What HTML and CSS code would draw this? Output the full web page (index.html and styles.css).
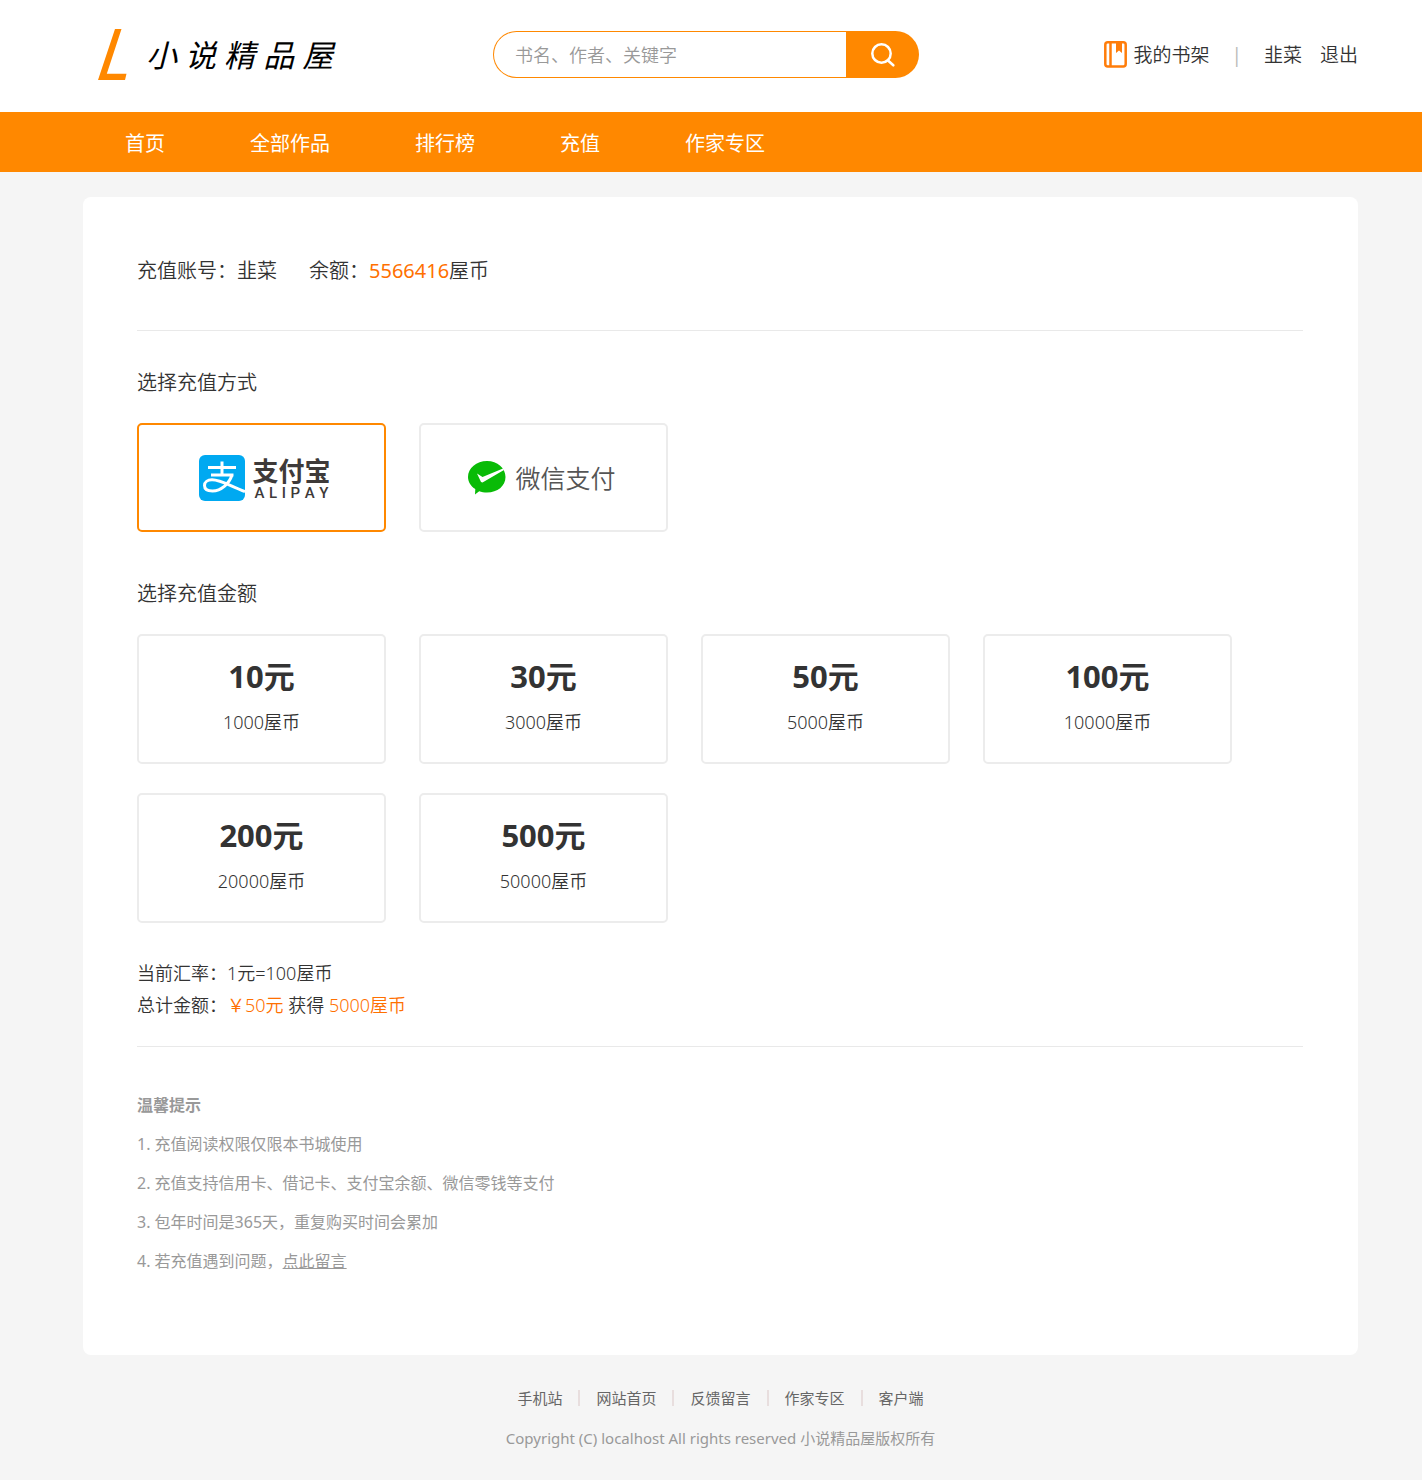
FILE: index.html
```html
<!DOCTYPE html>
<html lang="zh-CN">
<head>
<meta charset="utf-8">
<title>充值 - 小说精品屋</title>
<meta name="viewport" content="width=device-width, initial-scale=1">
<link rel="stylesheet" href="styles.css">
</head>
<body>
<header class="header">
  <div class="wrap header-row">
    <a class="logo" href="#">
      <svg class="logo-mark" viewBox="0 0 30 52" aria-hidden="true"><path d="M17 0H23.500L8.800 44.800H28.500L27 51H0Z"/></svg>
      <span class="logo-text">小 说 精 品 屋</span>
    </a>
    <form class="search">
      <input class="search-input" type="text" placeholder="书名、作者、关键字" aria-label="搜索">
      <button class="search-btn" type="button" aria-label="搜索">
        <svg class="search-icon" viewBox="0 0 24 24" aria-hidden="true"><circle cx="10.500" cy="10.500" r="9.200"/><path d="M17 17.500L22.300 22.300"/></svg>
      </button>
    </form>
    <div class="user">
      <a class="shelf" href="#">
        <svg class="shelf-icon" viewBox="0 0 23 27" aria-hidden="true"><rect class="shelf-line" x="1.300" y="1.300" width="20.400" height="24.200" rx="2.500"/><path class="shelf-line" d="M6.500 1.500V25.500"/><path class="shelf-fill" d="M12 1H18V12L15 9.500L12 12Z"/></svg>
        <span>我的书架</span>
      </a>
      <span class="user-sep">|</span>
      <a class="user-name" href="#">韭菜</a>
      <a href="#">退出</a>
    </div>
  </div>
</header>
<nav class="nav">
  <div class="wrap nav-row">
    <a href="#">首页</a>
    <a href="#">全部作品</a>
    <a href="#">排行榜</a>
    <a href="#">充值</a>
    <a href="#">作家专区</a>
  </div>
</nav>
<main class="wrap panel">
  <section class="account">
    <span>充值账号：韭菜</span>
    <span>余额：<em class="balance">5566416</em>屋币</span>
  </section>
  <form class="recharge">
    <h2 class="title">选择充值方式</h2>
    <div class="options">
      <label class="option pay pay-alipay">
        <input class="option-radio" type="radio" name="pay" value="alipay" checked>
        <svg class="alipay-icon" viewBox="0 0 46 46" aria-hidden="true"><rect class="alipay-bg" width="46" height="46" rx="6"/><path class="alipay-line" d="M9 12.500H37M12 20H34.500M23 6.500V20M33 20C30 29 22 36 13.500 36C8 36 5.500 33.500 5.500 30.500C5.500 27 8.500 24.800 13 24.800C22 24.800 32 31.500 46 36.500"/></svg>
        <span class="alipay-words">
          <span class="alipay-cn">支付宝</span>
          <span class="alipay-en"><span>A</span><span>L</span><span>I</span><span>P</span><span>A</span><span>Y</span></span>
        </span>
      </label>
      <label class="option pay pay-wechat">
        <input class="option-radio" type="radio" name="pay" value="wechat">
        <svg class="wechat-icon" viewBox="0 0 38 34" aria-hidden="true"><path class="wechat-bg" d="M19 0C29.500 0 37.500 7 37.500 16C37.500 25 29.500 31.500 19 31.500C16.200 31.500 13.500 31.100 11.200 30.200L7 33.500L7.300 28C2.800 25.200 0 21 0 16C0 7 8.500 0 19 0Z"/><path class="wechat-check" d="M9 12.500L14.500 16L35 7.500L36 9L14.500 21.500L13 21Z"/></svg>
        <span class="wechat-text">微信支付</span>
      </label>
    </div>
    <h2 class="title">选择充值金额</h2>
    <div class="options">
      <label class="option amount"><input class="option-radio" type="radio" name="amount" value="10"><strong>10元</strong><span>1000屋币</span></label>
      <label class="option amount"><input class="option-radio" type="radio" name="amount" value="30"><strong>30元</strong><span>3000屋币</span></label>
      <label class="option amount"><input class="option-radio" type="radio" name="amount" value="50"><strong>50元</strong><span>5000屋币</span></label>
      <label class="option amount"><input class="option-radio" type="radio" name="amount" value="100"><strong>100元</strong><span>10000屋币</span></label>
      <label class="option amount"><input class="option-radio" type="radio" name="amount" value="200"><strong>200元</strong><span>20000屋币</span></label>
      <label class="option amount"><input class="option-radio" type="radio" name="amount" value="500"><strong>500元</strong><span>50000屋币</span></label>
    </div>
    <div class="summary">
      <p>当前汇率：1元=100屋币</p>
      <p>总计金额：<span class="price">￥50元</span> 获得 <span class="price">5000屋币</span></p>
    </div>
  </form>
  <section class="tips">
    <h3>温馨提示</h3>
    <p>1. 充值阅读权限仅限本书城使用</p>
    <p>2. 充值支持信用卡、借记卡、支付宝余额、微信零钱等支付</p>
    <p>3. 包年时间是365天，重复购买时间会累加</p>
    <p>4. 若充值遇到问题，<a href="#">点此留言</a></p>
  </section>
</main>
<footer class="footer wrap">
  <div class="footer-links">
    <a href="#">手机站</a><i></i><a href="#">网站首页</a><i></i><a href="#">反馈留言</a><i></i><a href="#">作家专区</a><i></i><a href="#">客户端</a>
  </div>
  <p class="copyright">Copyright (C) localhost All rights reserved 小说精品屋版权所有</p>
</footer>
</body>
</html>
```
FILE: styles.css
```css
* { box-sizing: border-box; }

body {
  margin: 0;
  background: #f5f5f5;
  color: #333;
  font: 350 18px/32px "Noto Sans", "Noto Sans CJK SC", sans-serif;
}

a { color: inherit; text-decoration: none; }
h2, h3, p { margin: 0; }

.wrap { margin: 0 64px 0 83px; }

/* Header */
.header { background: #fff; }
.header-row {
  display: grid;
  grid-template-columns: 410px 426px 1fr;
  align-items: center;
  height: 112px;
  padding-bottom: 3px;
}

.logo { display: flex; align-items: center; gap: 18px; padding-left: 15px; color: #000; }
.logo-mark { width: 30px; height: 52px; fill: #ff8800; }
.logo-text { font-size: 31px; font-style: italic; font-weight: 400; line-height: 52px; }

.search { display: flex; height: 47px; }
.search-input {
  flex: 1;
  min-width: 0;
  padding: 0 21px;
  border: 1px solid #ff8800;
  border-right: 0;
  border-radius: 24px 0 0 24px;
  background: #fff;
  color: #333;
  font: inherit;
  outline: 0;
}
.search-input::placeholder { color: #999; opacity: 1; }
.search-btn {
  display: flex;
  align-items: center;
  justify-content: center;
  width: 73px;
  padding: 0;
  border: 0;
  border-radius: 0 24px 24px 0;
  background: #ff8800;
}
.search-icon { width: 24px; height: 24px; fill: none; stroke: #fff; stroke-width: 2.5; stroke-linecap: round; }

.user { display: flex; align-items: center; justify-content: flex-end; font-size: 19px; }
.shelf { display: flex; align-items: center; gap: 6px; }
.shelf-icon { width: 23px; height: 27px; }
.shelf-line { fill: none; stroke: #ff7d0a; stroke-width: 2.5; }
.shelf-fill { fill: #ff7d0a; }
.user-sep { margin: 0 22px; color: #bbb; font-weight: 400; }
.user-name { margin-right: 18px; }

/* Navigation */
.nav { background: #ff8800; }
.nav-row { display: flex; padding-top: 3px; color: #fff; font-size: 20px; font-weight: 400; line-height: 57px; }
.nav-row a { padding: 0 43px 0 42px; }

/* Recharge panel */
.panel {
  margin-top: 25px;
  padding: 59px 55px 74px 54px;
  border-radius: 8px;
  background: #fff;
}

.account {
  display: flex;
  gap: 32px;
  padding-bottom: 44px;
  border-bottom: 1px solid #e9e9e9;
  font-size: 20px;
  line-height: 30px;
}
.balance { color: #ff7000; font-style: normal; font-weight: 400; }

.title { margin: 37px 0 25px; font-size: 20px; font-weight: inherit; line-height: 30px; }
.options + .title { margin-top: 47px; }

.options { display: grid; grid-template-columns: repeat(auto-fill, 249px); gap: 29px 33px; }
.option {
  position: relative;
  display: flex;
  border: 2px solid #ececec;
  border-radius: 5px;
  background: #fff;
  cursor: pointer;
}
.option:has(.option-radio:checked) { border-color: #ff8800; }
.option-radio { position: absolute; inset: 0; width: 100%; height: 100%; margin: 0; opacity: 0; cursor: pointer; }

.pay { align-items: center; justify-content: center; height: 109px; }
.pay-alipay { gap: 7px; padding-left: 7px; }
.pay-wechat { gap: 9px; padding-right: 3px; }
.alipay-icon { width: 46px; height: 46px; }
.alipay-bg { fill: #00a9f1; }
.alipay-line { fill: none; stroke: #fff; stroke-width: 3; }
.alipay-words { color: #3e3a39; font-weight: 700; white-space: nowrap; }
.alipay-cn { display: block; font-size: 26px; line-height: 30px; }
.alipay-en {
  display: flex;
  justify-content: space-between;
  padding: 0 2px;
  font-family: Roboto, sans-serif;
  font-size: 15px;
  font-weight: 500;
  line-height: 14px;
}
.wechat-icon { width: 38px; height: 34px; }
.wechat-bg { fill: #09bb07; }
.wechat-check { fill: #fff; }
.wechat-text { color: #555; font-size: 25px; }

.amount { flex-direction: column; align-items: center; height: 130px; padding-top: 20px; }
.amount strong { font-size: 31px; font-weight: 700; line-height: 40px; }
.amount span { margin-top: 14px; line-height: 24px; }

.summary { margin-top: 34px; padding-bottom: 25px; border-bottom: 1px solid #e9e9e9; }
.price { color: #ff7000; }

.tips { padding-top: 39px; color: #999; font-size: 16px; font-weight: 400; line-height: 39px; }
.tips h3 { font-size: 16px; font-weight: 700; }
.tips a { text-decoration: underline; }

/* Footer */
.footer { padding: 33px 0 32px; font-size: 15px; font-weight: 400; line-height: 20px; text-align: center; }
.footer-links { display: flex; align-items: center; justify-content: center; color: #666; }
.footer-links i { width: 2px; height: 16px; margin: 0 16px; background: #e8dede; }
.copyright { margin-top: 20px; color: #999; }
```
